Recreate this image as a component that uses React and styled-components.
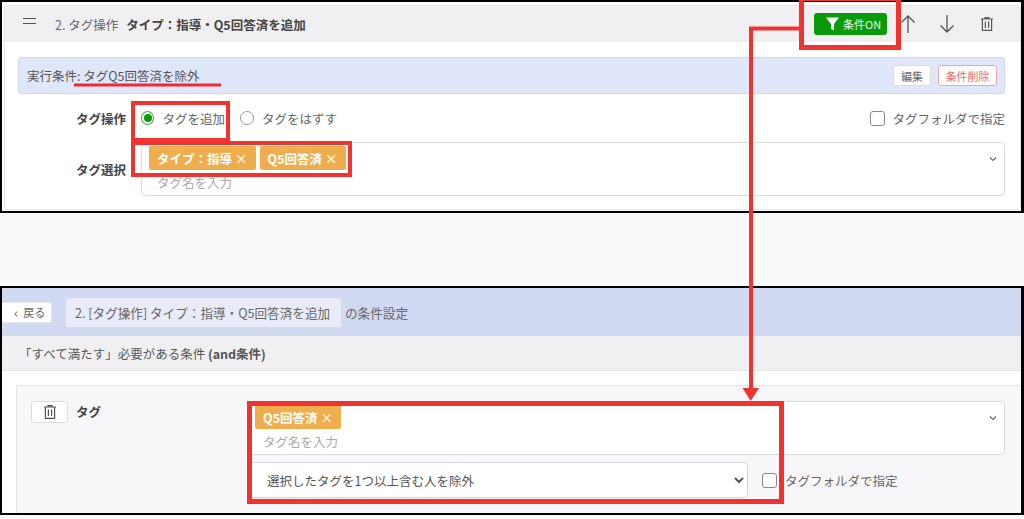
import styled, { createGlobalStyle } from "styled-components";

const GlobalStyle = createGlobalStyle`
	html, body {
		margin: 0;
		padding: 0;
		background: #fafafa;
	}
	* {
		box-sizing: border-box;
	}
	body {
		font-family: "Noto Sans CJK JP", "Noto Sans", sans-serif;
		font-size: 12px;
		color: #555;
	}
`;

const TrashIcon = ({ size = 16 }) => (
	<svg width={size} height={size} viewBox="0 0 16 16" fill="none" stroke="#555" strokeWidth="1.2">
		<path d="M2 3h12M6 3V1.600h4V3M3.400 3v11.400h9.200V3M6.400 5.500v6.600M9.600 5.500v6.600" />
	</svg>
);

const ArrowIcon = ({ down }) => (
	<svg width="16" height="20" viewBox="0 0 16 20" fill="none" stroke="#555" strokeWidth="1.3">
		{down ? <path d="M8 1v17M1.500 11.500 8 18l6.500-6.500" /> : <path d="M8 19V2M1.500 8.500 8 2l6.500 6.500" />}
	</svg>
);

const FunnelIcon = () => (
	<svg width="13" height="14" viewBox="0 0 13 14" fill="#fff">
		<path d="M0 0.500h13L8 7v6.500L5 12V7z" />
	</svg>
);

const Chevron = () => (
	<svg width="8" height="6" viewBox="0 0 8 6" fill="none" stroke="#666" strokeWidth="1.100">
		<path d="M1 1.500 4 4.500 7 1.500" />
	</svg>
);

const Tag = ({ children }) => (
	<TagChip>
		{children}
		<TagClose>×</TagClose>
	</TagChip>
);

const TagInputBox = ({ tags }) => (
	<TagBox>
		<TagRow>
			{tags.map((tag) => (
				<Tag key={tag}>{tag}</Tag>
			))}
		</TagRow>
		<TagInput placeholder="タグ名を入力" />
		<ChevronSlot>
			<Chevron />
		</ChevronSlot>
	</TagBox>
);

export default function App() {
	return (
		<Page>
			<GlobalStyle />
			<Panel $height={213}>
				<ItemCard>
					<ItemHeader>
						<HeaderLeft>
							<Handle />
							<StepName>2. タグ操作</StepName>
							<StepTitle>タイプ：指導・Q5回答済を追加</StepTitle>
						</HeaderLeft>
						<HeaderActions>
							<ConditionButton>
								<FunnelIcon />
								条件ON
							</ConditionButton>
							<IconSlot>
								<ArrowIcon />
							</IconSlot>
							<IconSlot>
								<ArrowIcon down />
							</IconSlot>
							<IconSlot>
								<TrashIcon />
							</IconSlot>
						</HeaderActions>
					</ItemHeader>
					<ItemBody>
						<ConditionBar>
							<span>実行条件: タグQ5回答済を除外</span>
							<BarButtons>
								<SmallButton $width={38}>編集</SmallButton>
								<SmallButton $width={59} $danger>
									条件削除
								</SmallButton>
							</BarButtons>
						</ConditionBar>
						<FormRow>
							<FieldLabel>タグ操作</FieldLabel>
							<RadioOption $width={99}>
								<Radio $checked />
								タグを追加
							</RadioOption>
							<RadioOption>
								<Radio />
								タグをはずす
							</RadioOption>
							<FolderCheck $right>
								<CheckBox />
								タグフォルダで指定
							</FolderCheck>
						</FormRow>
						<SelectRow>
							<FieldLabel>タグ選択</FieldLabel>
							<TagInputBox tags={["タイプ：指導", "Q5回答済"]} />
						</SelectRow>
					</ItemBody>
				</ItemCard>
			</Panel>
			<Panel $height={229} $top={73}>
				<ConditionHead>
					<BackButton>
						<BackMark>‹</BackMark> 戻る
					</BackButton>
					<TitleChip>2. [タグ操作] タイプ：指導・Q5回答済を追加</TitleChip>
					<span>の条件設定</span>
				</ConditionHead>
				<SubHead>
					「すべて満たす」必要がある条件&nbsp;<b>(and条件)</b>
				</SubHead>
				<CardArea>
					<ConditionCard>
						<CardLeft>
							<TrashButton>
								<TrashIcon />
							</TrashButton>
							<CardLabel>タグ</CardLabel>
						</CardLeft>
						<CardFields>
							<TagInputBox tags={["Q5回答済"]} />
							<CardOptions>
								<Select defaultValue="exclude">
									<option value="exclude">選択したタグを1つ以上含む人を除外</option>
								</Select>
								<FolderCheck $gap={8}>
									<CheckBox />
									タグフォルダで指定
								</FolderCheck>
							</CardOptions>
						</CardFields>
					</ConditionCard>
				</CardArea>
			</Panel>

			<RedBox $x={131} $y={101} $w={99} $h={41} />
			<RedBox $x={131} $y={141} $w={221} $h={36} />
			<RedBox $x={799} $y={-4} $w={102} $h={54} $b={5} />
			<RedBox $x={247} $y={401} $w={537} $h={103} $b={5} />
			<Overlay width="1024" height="519" viewBox="0 0 1024 519">
				<path d="M74 85H221" stroke="#ee2b2f" strokeWidth="3" fill="none" />
				<path d="M800 28.500H751V390" stroke="#f13330" strokeWidth="4" fill="none" />
				<path d="M742.500 388H759L750.700 401z" fill="#f13330" />
			</Overlay>
		</Page>
	);
}

const Page = styled.div`
	position: relative;
	width: 1024px;
	height: 519px;
	overflow: hidden;
`;

const Panel = styled.section`
	height: ${(p) => p.$height}px;
	margin-top: ${(p) => p.$top || 0}px;
	border: solid #000;
	border-width: 2px 3px 2px 2px;
	background: #fff;
	overflow: hidden;
`;

const ItemCard = styled.div`
	margin: 3px 0 0 2px;
	height: 205px;
	border: 1px solid #e6e6ea;
	border-radius: 3px;
`;

const ItemHeader = styled.div`
	display: flex;
	align-items: center;
	justify-content: space-between;
	height: 36px;
	padding: 0 25px 0 18px;
	background: #f0f0f3;
`;

const HeaderLeft = styled.div`
	display: flex;
	align-items: center;
`;

const Handle = styled.span`
	width: 13px;
	height: 6px;
	margin: -6px 19px 0 0;
	border-top: 1px solid #555;
	border-bottom: 1px solid #555;
`;

const StepName = styled.span`
	font-size: 12.500px;
	color: #666;
	margin-right: 8px;
`;

const StepTitle = styled.span`
	font-size: 12.500px;
	font-weight: 700;
	color: #444;
`;

const HeaderActions = styled.div`
	display: flex;
	align-items: center;
`;

const ConditionButton = styled.div`
	display: flex;
	align-items: center;
	gap: 4px;
	width: 73px;
	height: 22px;
	margin-right: 13px;
	padding-left: 12px;
	border-radius: 3px;
	background: #0a9a0a;
	color: #e8f8e8;
	font-size: 11px;
`;

const IconSlot = styled.div`
	display: flex;
	align-items: center;
	justify-content: center;
	width: 16px;
	margin-right: 23px;

	&:last-child {
		margin: 0 0 0 1px;
	}
`;

const ItemBody = styled.div`
	padding: 15px 15px 0 13px;
`;

const ConditionBar = styled.div`
	display: flex;
	align-items: center;
	justify-content: space-between;
	height: 37px;
	padding: 0 7px 0 8px;
	background: #e1e7fb;
	border: 1px solid #cfd7ee;
	border-radius: 3px;
	font-size: 12.500px;
	color: #555;
`;

const BarButtons = styled.div`
	display: flex;
	gap: 7px;
`;

const SmallButton = styled.div`
	display: flex;
	align-items: center;
	justify-content: center;
	width: ${(p) => p.$width}px;
	height: 21px;
	background: #fff;
	border: 1px solid ${(p) => (p.$danger ? "#f0a5a5" : "#dcdcdc")};
	border-radius: 3px;
	font-size: 11px;
	color: ${(p) => (p.$danger ? "#ee6a6a" : "#666")};
`;

const FormRow = styled.div`
	display: flex;
	align-items: center;
	height: 48px;
	font-size: 12.500px;
	color: #666;
`;

const FieldLabel = styled.div`
	flex: none;
	width: 108px;
	text-align: right;
	font-size: 12.500px;
	font-weight: 700;
	color: #444;
`;

const RadioOption = styled.label`
	display: flex;
	align-items: center;
	gap: 8px;
	margin-left: 15px;
	width: ${(p) => (p.$width ? `${p.$width - 15}px` : "auto")};
	white-space: nowrap;
`;

const Radio = styled.span`
	display: flex;
	align-items: center;
	justify-content: center;
	width: 14px;
	height: 14px;
	border-radius: 50%;
	border: 1px solid ${(p) => (p.$checked ? "#3db33d" : "#999")};
	background: #fff;

	&::after {
		content: "";
		display: ${(p) => (p.$checked ? "block" : "none")};
		width: 8px;
		height: 8px;
		border-radius: 50%;
		background: #0a9a0a;
	}
`;

const FolderCheck = styled.label`
	display: flex;
	align-items: center;
	gap: ${(p) => p.$gap || 7}px;
	margin-left: ${(p) => (p.$right ? "auto" : "14px")};
	font-size: 12.500px;
	color: #666;
`;

const CheckBox = styled.span`
	display: block;
	width: 15px;
	height: 15px;
	border: 1px solid #888;
	border-radius: 3px;
	background: #fff;
`;

const SelectRow = styled.div`
	display: flex;
	gap: 15px;
	align-items: center;
`;

const TagBox = styled.div`
	position: relative;
	width: 100%;
	height: 54px;
	padding: 3px 8px 0 7px;
	background: #fff;
	border: 1px solid #dcdcdc;
	border-radius: 4px;
`;

const TagRow = styled.div`
	display: flex;
	gap: 4px;
`;

const TagChip = styled.span`
	display: flex;
	align-items: center;
	height: 24px;
	padding: 0 8px;
	border-radius: 2px;
	background: #f0ad4e;
	color: #fff;
	font-size: 12.500px;
	font-weight: 700;
	white-space: nowrap;
`;

const TagClose = styled.span`
	margin-left: 3px;
	font-weight: 500;
`;

const TagInput = styled.input`
	display: block;
	width: 200px;
	height: 24px;
	padding: 0 0 0 8px;
	border: 0;
	outline: 0;
	background: transparent;
	font-family: inherit;
	font-size: 12.500px;

	&::placeholder {
		color: #aaa;
	}
`;

const ChevronSlot = styled.span`
	position: absolute;
	top: 13px;
	right: 7px;
	display: flex;
`;

const ConditionHead = styled.div`
	display: flex;
	align-items: center;
	height: 48px;
	background: #d2d9f3;
	font-size: 12.600px;
	color: #666;
`;

const BackButton = styled.div`
	display: flex;
	align-items: center;
	gap: 5px;
	width: 50px;
	height: 21px;
	margin-right: 14px;
	padding-left: 12px;
	background: #fff;
	border: 1px solid #e4e6f0;
	border-left: 0;
	border-radius: 0 3px 3px 0;
	font-size: 11px;
`;

const BackMark = styled.span`
	font-size: 14px;
	line-height: 1;
`;

const TitleChip = styled.div`
	display: flex;
	align-items: center;
	height: 29px;
	width: 275px;
	margin-right: 4px;
	padding-left: 9px;
	background: #e9ecf8;
	border-radius: 2px;
	white-space: nowrap;
`;

const SubHead = styled.div`
	display: flex;
	align-items: center;
	height: 35px;
	padding-left: 17px;
	background: #f0f0f2;
	border-bottom: 1px solid #e4e4e6;
	font-size: 12.500px;
	color: #555;

	b {
		font-weight: 700;
	}
`;

const CardArea = styled.div`
	padding: 14px 0 0 14px;
`;

const ConditionCard = styled.div`
	display: flex;
	height: 130px;
	padding: 15px 16px 0 14px;
	background: #f7f7fa;
	border: 1px solid #e4e4e8;
	border-right: 0;
`;

const CardLeft = styled.div`
	display: flex;
	flex: none;
	width: 216px;
	gap: 8px;
`;

const TrashButton = styled.div`
	display: flex;
	align-items: center;
	justify-content: center;
	width: 37px;
	height: 22px;
	background: #fff;
	border: 1px solid #dcdcdc;
	border-radius: 3px;
`;

const CardLabel = styled.div`
	height: 22px;
	line-height: 22px;
	font-size: 12.500px;
	font-weight: 700;
	color: #444;
`;

const CardFields = styled.div`
	flex: 1;
	display: flex;
	flex-direction: column;
	gap: 7px;
`;

const CardOptions = styled.div`
	display: flex;
	align-items: center;
`;

const Select = styled.select`
	width: 501px;
	height: 36px;
	padding-left: 15px;
	background: #fff;
	border: 1px solid #d5d5dc;
	border-radius: 4px;
	font-family: inherit;
	font-size: 12.500px;
	color: #555;
`;

const RedBox = styled.div`
	position: absolute;
	left: ${(p) => p.$x}px;
	top: ${(p) => p.$y}px;
	width: ${(p) => p.$w}px;
	height: ${(p) => p.$h}px;
	border: ${(p) => p.$b || 4}px solid #f13330;
`;

const Overlay = styled.svg`
	position: absolute;
	left: 0;
	top: 0;
	pointer-events: none;
`;
